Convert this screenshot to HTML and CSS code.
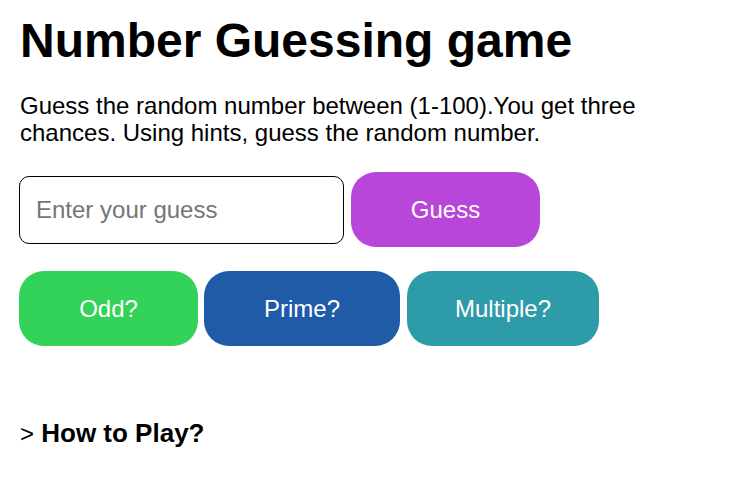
FILE: index.html
```html
<!DOCTYPE html>
<html lang="en">
<head>
<meta charset="utf-8">
<title>Number Guessing game</title>
<link rel="stylesheet" href="styles.css">
</head>
<body>
<main class="page">
  <h1 class="title">Number Guessing game</h1>
  <p class="intro">Guess the random number between (1-100).You get three chances. Using hints, guess the random number.</p>
  <div class="guess-row">
    <input class="guess-input" type="text" placeholder="Enter your guess">
    <button class="btn btn-guess">Guess</button>
  </div>
  <div class="hint-row">
    <button class="btn btn-odd">Odd?</button>
    <button class="btn btn-prime">Prime?</button>
    <button class="btn btn-multiple">Multiple?</button>
  </div>
  <div class="howto"><span class="arrow">&gt;</span> <span class="howto-label">How to Play?</span></div>
</main>
</body>
</html>
```
FILE: styles.css
```css
* { box-sizing: border-box; }
html, body { margin: 0; padding: 0; background: #fff; }
body { font-family: "Liberation Sans", Arial, sans-serif; color: #000; }
.page { padding: 13px 20px 0 20px; }
.title { margin: 0; font-size: 48px; font-weight: bold; line-height: 55px; }
.intro { margin: 24px 0 0 0; font-size: 24px; line-height: 27px; }
.guess-row { display: flex; align-items: center; gap: 7px; margin-top: 26px; margin-left: -1px; }
.guess-input {
  width: 325px; height: 68px; border: 1px solid #000; border-radius: 10px;
  padding: 0 16px; font-family: inherit; font-size: 24px; color: #000; background: #fff; outline: none;
}
.guess-input::placeholder { color: #757575; }
.btn {
  height: 75px; border: none; border-radius: 25px; color: #fff;
  font-family: inherit; font-size: 24px; padding: 0; cursor: pointer;
}
.btn-guess { width: 189px; background: #b846d8; }
.hint-row { display: flex; gap: 6px; margin-top: 24px; margin-left: -1px; }
.btn-odd { width: 179px; background: #33d35a; }
.btn-prime { width: 196px; background: #205ba8; }
.btn-multiple { width: 192px; background: #2e9ba8; margin-left: 1px; }
.howto { margin-top: 72px; font-size: 26px; line-height: 30px; }
.arrow { font-size: 24px; font-weight: normal; }
.howto-label { font-weight: bold; }
```
